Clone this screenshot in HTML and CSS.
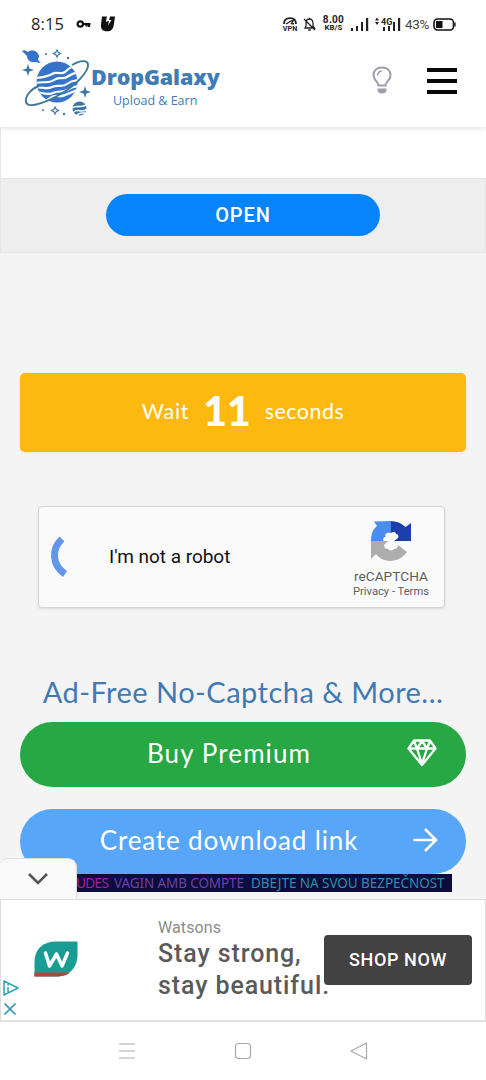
FILE: index.html
```html
<!DOCTYPE html>
<html lang="en">
<head>
<meta charset="utf-8">
<meta name="viewport" content="width=device-width">
<title>DropGalaxy</title>
<link rel="stylesheet" href="styles.css">
</head>
<body>
<div class="screen">
  <div class="status">
    <span class="clock">8:15</span>
    <svg class="key" width="16" height="10" viewBox="0 0 16 10"><path d="M4.500 5H14.500M13 5v3M10.500 5v2.500" fill="none" stroke="#111" stroke-width="2.200"/><circle cx="4.300" cy="5" r="2.700" fill="#fff" stroke="#111" stroke-width="2.200"/></svg>
    <svg class="app" width="16" height="16" viewBox="0 0 16 16"><path d="M2 0.500h5l-1.200 5.200L9 5 8 9.500 11.500 4H9.200L10 .5h5L13.800 9c-.6 4.200-3 6.300-6.800 6.300C2.500 15.300.5 12.500 1 8.500z" fill="#111"/></svg>
    <span class="spacer"></span>
    <span class="vpn"><svg width="14" height="8" viewBox="0 0 14 8"><path d="M1 7C1 3 3.600 1.200 7 1.200S13 3 13 7" fill="none" stroke="#222" stroke-width="1.800"/><path d="M3 7l4-2.500L10.500 3 8.500 6.500 11 7" fill="none" stroke="#222" stroke-width="1.300"/></svg><b>VPN</b></span>
    <svg class="bell" width="13" height="15" viewBox="0 0 13 15"><path d="M2 11h9.500L10 9V6c0-2.400-1.300-4-3.500-4S3 3.600 3 6v3zM5.200 13h2.600M6.500 2V.7M1 2l11 11" fill="none" stroke="#222" stroke-width="1.300"/></svg>
    <span class="speed"><b>8.00</b><b>KB/S</b></span>
    <svg class="sig1" width="19" height="14" viewBox="0 0 19 14" fill="#222"><path d="M1 11h2v3H1zM6 9h2v5H6zM11 5h2v9h-2zM16 1h2.200v13H16z"/></svg>
    <svg class="sig2" width="27" height="16" viewBox="0 0 27 16" fill="#222"><path d="M1 4.500l2-3 2 3zM1 6l2 3 2-3z"/><text x="7" y="9" class="fourg">4G</text><path d="M9 11h2v4H9zM14 10h2v5h-2zM19 6h2v9h-2zM24 2h2.200v13H24z"/></svg>
    <span class="percent">43%</span>
    <svg class="battery" width="23" height="13" viewBox="0 0 23 13"><rect x="1" y="1" width="19.500" height="11" rx="3.500" fill="none" stroke="#111" stroke-width="1.600"/><path d="M3 3h6.500v7H3z" fill="#111"/><path d="M22 4.500v4" stroke="#111" stroke-width="1.300"/></svg>
  </div>
  <header class="header">
    <svg class="planet" width="70" height="70" viewBox="0 0 70 70">
      <defs><clipPath id="globe"><circle cx="36" cy="34" r="20.500"/></clipPath></defs>
      <circle cx="36" cy="34" r="20.500" fill="#3674c9"/>
      <g clip-path="url(#globe)" fill="none" stroke="#fff" stroke-width="2.200"><path d="M15 30c8-1 11-1 16-4s9 1 13-2 5-6 13-7"/><path d="M14 35c9-2 14 1 19-3s8 0 13-3 5-4 13-5"/><path d="M13 40c8-2 12 2 18-1s10 1 15-3 6-3 12-4"/><path d="M14 44c8 0 12 4 18 1s9 0 14-3 7-4 12-4"/><path d="M23 54c5-2 7-7 13-6s11-2 20-6"/></g>
      <path d="M51 17c9-5 15-5 16-1 1 7-11 21-29 31S6 60 5 54c-1-5 4-13 13-16" fill="none" stroke="#3f7897" stroke-width="1.900"/>
      <path d="M1 3c3-2 4 0 6 1 4-3 10-1 11 4l-1 4 3 3c-3 0-4-1-6-1-4 1-8-2-8-6z" fill="#3674c9"/>
      <g fill="#3b76a8"><path d="M7 16l1.400 4.600L13 22l-4.600 1.400L7 28l-1.400-4.600L1 22l4.600-1.400zM64 38l1.400 4.600L70 44l-4.600 1.400L64 50l-1.400-4.600L58 44l4.600-1.400z"/><circle cx="25" cy="6" r="1"/><circle cx="47" cy="10" r="1.200"/><circle cx="22" cy="62" r="1"/><circle cx="43" cy="66" r="1.200"/></g>
      <path d="M36 2l1.200 2.300L39.500 5.500l-2.300 1.200L36 9l-1.200-2.300-2.300-1.200 2.300-1.200zM34 59l1.200 2.300 2.300 1.200-2.300 1.200L34 66l-1.200-2.300-2.300-1.200 2.300-1.200z" fill="none" stroke="#3b76a8" stroke-width="1.200"/>
      <circle cx="58.500" cy="60.500" r="7" fill="#3b76a8"/><path d="M51 60c6-4 6 1 14-3M53 64c4-4 8 2 13-3M56 68c1-4 5-3 8-3" stroke="#fff" stroke-width="1.500" fill="none"/>
    </svg>
    <div class="brand"><span class="name">DropGalaxy</span><span class="tagline">Upload &amp; Earn</span></div>
    <svg class="bulb" width="20" height="28" viewBox="0 0 20 28"><path d="M6.500 19.500c0-4-5-5-5-10.300C1.500 4.500 5 1.500 10 1.500s8.500 3 8.500 7.700c0 5.300-5 6.300-5 10.300z" fill="#fff" stroke="#9b9fac" stroke-width="2"/><path d="M5.500 9.500C5.700 7 7.200 5.300 9.800 5" fill="none" stroke="#9b9fac" stroke-width="1.300"/><path d="M5.500 22.500h9V24c0 2-1.500 3.500-4.500 3.500S5.500 26 5.500 24z" fill="#9b9fac"/></svg>
    <div class="burger"><i></i><i></i><i></i></div>
  </header>
  <div class="blank"></div>
  <section class="promo"><div class="open">OPEN</div></section>
  <main class="content">
    <div class="wait"><span class="w1">Wait</span><b>11</b><span class="w2">seconds</span></div>
    <div class="captcha">
      <svg class="spin" width="20" height="42" viewBox="0 0 20 42"><path d="M13 3C2 13 3 29 16 38" fill="none" stroke="#6196e8" stroke-width="7"/></svg>
      <span class="robot">I'm not a robot</span>
      <div class="badge">
        <svg width="42" height="42" viewBox="0 0 42 42"><path d="M20.500 1v12c-4-1-6 1-5 4-2 0-3 2-2 4H1C1 14 3 9 7 6L4 1.500z" fill="#4a8df0"/><path d="M20.500 1c6 0 11 2 15 6l5.500-4v18H24l4-3c1-2 0-4-2-4 0-2-2-3-5.500-1z" fill="#1c3fae"/><path d="M1 21h17l-4 4c0 3 2 4 4 4 2 2 4 2 6 0 3 0 4-2 4-4l9 7c-8 11-23 12-31 2l-5 5z" fill="#adadad"/></svg>
        <span class="re">reCAPTCHA</span><span class="terms">Privacy - Terms</span>
      </div>
    </div>
    <h2 class="pitch"><span>Ad-Free No-Captcha &amp; More...</span></h2>
    <div class="btn green"><span class="t1">Buy Premium</span><svg width="30" height="28" viewBox="0 0 30 28"><path d="M7 1.500h16l5.500 8L15 26 1.500 9.500zM2 9.500h26M10 9.500L15 25l5-15.500M7 2l3 7.500L15 2l5 7.500L23 2" fill="none" stroke="#fff" stroke-width="2.300" stroke-linejoin="round"/></svg></div>
    <div class="btn blue"><span class="t2">Create download link</span><svg class="arrow" width="26" height="26" viewBox="0 0 26 26"><path d="M1.500 13h22M13 2l11 11-11 11" fill="none" stroke="#fff" stroke-width="2.600"/></svg></div>
    <div class="ticker"><span class="k1">UDES</span><span class="k2">VAGIN AMB COMPTE</span><span class="k3">DBEJTE NA SVOU BEZPEČNOST</span></div>
    <div class="tab"><svg width="20" height="12" viewBox="0 0 20 12"><path d="M1 1l9 9 9-9" fill="none" stroke="#555" stroke-width="2.500"/></svg></div>
  </main>
  <section class="ad">
    <div class="choices"><svg width="16" height="16" viewBox="0 0 16 16"><path d="M1 1v14l14-7zM5 7v5M5 4v1.500" fill="none" stroke="#2ba3b9" stroke-width="1.500" stroke-linejoin="round"/></svg><svg width="14" height="14" viewBox="0 0 14 14"><path d="M1.500 1.500l11 11m0-11l-11 11" stroke="#2a95b0" stroke-width="1.700"/></svg></div>
    <svg class="watsons" width="44" height="36" viewBox="0 0 44 36"><path d="M.5 35.500V21C.5 8 9 .5 22 .5h21.500V14c0 13-9 21.500-21 21.500z" fill="#199d93"/><path d="M.5 31.500H36c-4 3-8 4-14 4H.5z" fill="#b8423e"/><path d="M11.500 12l4 13 7-12 5.500 12 5.500-13" fill="none" stroke="#fff" stroke-width="3.500" stroke-linecap="round" stroke-linejoin="round"/></svg>
    <div class="copy"><span class="advertiser">Watsons</span><span class="l1">Stay strong,</span><span class="l2">stay beautiful.</span></div>
    <div class="shop">SHOP NOW</div>
  </section>
  <nav class="nav">
    <svg width="18" height="18" viewBox="0 0 18 18"><path d="M1 2h16M1 9h16M1 16h16" stroke="#a9a9a9" stroke-width="1.200"/></svg>
    <svg width="18" height="18" viewBox="0 0 18 18"><rect x="1.500" y="1.500" width="15" height="15" rx="3" fill="none" stroke="#a9a9a9" stroke-width="1.200"/></svg>
    <svg width="18" height="18" viewBox="0 0 18 18"><path d="M16.500 1v16L1 9z" fill="none" stroke="#a9a9a9" stroke-width="1.200" stroke-linejoin="round"/></svg>
  </nav>
</div>
</body>
</html>
```
FILE: styles.css
```css
* { box-sizing: border-box; }
body { margin: 0; font-family: Roboto, sans-serif; }
svg { display: block; flex: none; }
span, b, .open, .shop { white-space: nowrap; }
.screen { width: 486px; height: 1080px; display: flex; flex-direction: column; overflow: hidden; background: #fff; }
.screen > * { flex: none; }

.status { height: 48px; display: flex; align-items: center; padding-left: 31px; padding-right: 30px; color: #222; }
.clock { font: 16.500px/20px "Open Sans", sans-serif; width: 45px; letter-spacing: 0.1px; }
.app { margin-left: 8px; }
.spacer { flex: 1; }
.vpn { width: 14px; display: flex; flex-direction: column; align-items: center; }
.vpn b { font-size: 7.200px; line-height: 7px; }
.bell { margin-left: 6px; }
.speed { width: 23px; margin-left: 6px; display: flex; flex-direction: column; align-items: center; }
.speed b { font-size: 10px; line-height: 8px; letter-spacing: 0.3px; }
.speed b + b { font-size: 7.800px; line-height: 8px; letter-spacing: 0.1px; }
.sig1 { margin-left: 5px; }
.sig2 { margin-left: 5px; }
.fourg { font: bold 9px Roboto, sans-serif; }
.percent { font: 13.500px/18px Roboto, sans-serif; color: #444; margin-left: 4px; width: 24px; letter-spacing: -0.3px; }
.battery { margin-left: 4px; }

.header { height: 79px; padding-left: 21px; padding-right: 29px; display: flex; align-items: flex-start; box-shadow: 0 1px 6px rgba(0,0,0,.14); clip-path: inset(0 0 -8px 0); position: relative; }
.brand { flex: 1; height: 66px; padding-top: 14px; display: flex; flex-direction: column; font-family: "Open Sans", sans-serif; color: #3f7cb5; }
.name { font-size: 21.500px; font-weight: 800; line-height: 30px; letter-spacing: -0.1px; }
.tagline { font-size: 12.500px; line-height: 18px; padding-left: 22px; }
.bulb { margin-top: 18px; margin-right: 35px; }
.burger { width: 30px; height: 26px; margin-top: 20px; display: flex; flex-direction: column; justify-content: space-between; }
.burger i { height: 4px; background: #080808; }
.blank { height: 51px; border-left: 1px solid #e8e8e8; }
.promo { height: 75px; background: #eee; border: 1px solid #e6e6e6; display: flex; justify-content: center; padding-top: 15px; }
.open { width: 274px; height: 42px; border-radius: 21px; background: #0784fc; color: #fff; font-size: 20px; font-weight: 500; line-height: 43px; letter-spacing: .9px; text-align: center; }

.content { height: 646px; padding: 120px 20px 0; background: #f4f4f4; position: relative; display: flex; flex-direction: column; }
.content > * { flex: none; }
.wait { height: 79px; border-radius: 5px; background: #fdb910; color: #fff; display: flex; justify-content: center; align-items: center; padding-bottom: 3px; font: 21.500px/30px Lato, sans-serif; box-shadow: 0 1px 3px rgba(253,210,100,.3); }
.w1 { letter-spacing: .7px; }
.w2 { letter-spacing: .45px; }
.wait b { font-size: 41px; font-weight: 900; line-height: 50px; margin: 0 14px; }
.captcha { height: 102px; margin: 54px 21px 0 18px; border: 1px solid #d3d3d3; border-radius: 4px; background: #fafafa; box-shadow: 0 1px 3px rgba(0,0,0,.1); display: flex; align-items: center; padding-left: 10px; }
.robot { font-size: 19px; color: #111; margin-left: 40px; flex: 1; letter-spacing: -.03px; padding-bottom: 2px; }
.badge { width: 90px; margin-right: 8px; padding-top: 5px; display: flex; flex-direction: column; align-items: center; color: #5d5d5d; }
.re { font-size: 13.700px; line-height: 18px; margin-top: 5px; }
.terms { font-size: 11.200px; line-height: 14px; }
.pitch { margin: 62px 0 0; height: 52px; text-align: center; font: 400 29px/43px Lato, sans-serif; color: #4279b2; letter-spacing: .48px; }
.btn { height: 65px; border-radius: 33px; display: flex; align-items: center; padding: 0 29px 0 31px; color: #fff; font: 26px/36px Lato, sans-serif; }
.btn span { flex: 1; text-align: center; padding-bottom: 4px; }
.t1 { letter-spacing: 1.100px; }
.t2 { letter-spacing: .85px; }
.green { background: #28a745; }
.green svg { margin-top: -3px; }
.blue { background: #57a6f9; margin-top: 22px; }
.arrow { margin: -3px -1px 0 5px; }
.ticker { width: 376px; height: 18px; margin-left: 56px; background: #0d0c3c; display: flex; align-items: center; gap: 6px; font: 13.500px/18px "Noto Sans", sans-serif; overflow: hidden; }
.k1 { color: #a12197; width: 32px; letter-spacing: -.6px; }
.k2 { color: #6844a7; width: 131px; letter-spacing: -.1px; }
.k3 { color: #328ca6; letter-spacing: -.05px; }
.tab { position: absolute; left: 0; bottom: 0; width: 77px; height: 41px; border: 1px solid #ddd; border-left: 0; border-bottom: 0; border-radius: 7px 9px 0 0; background: #fafafa; padding: 14px 0 0 28px; }
.ad { height: 123px; border: 1px solid #ddd; border-bottom: 2px solid #e0e0e0; display: flex; background: #fff; }
.choices { width: 33px; padding: 80px 0 0 2px; display: flex; flex-direction: column; gap: 6px; }
.watsons { margin-top: 41px; }
.copy { width: 166px; margin-left: 80px; padding-top: 18px; display: flex; flex-direction: column; color: #5a5a5a; }
.advertiser { font-size: 16px; line-height: 20px; color: #8b8b8b; letter-spacing: .1px; }
.l1, .l2 { font-size: 25px; font-weight: 500; line-height: 32px; letter-spacing: .9px; }
.shop { width: 148px; height: 50px; margin-top: 35px; border-radius: 4px; background: #424242; color: #fff; font-size: 18px; font-weight: 500; line-height: 49px; letter-spacing: .6px; text-align: center; }
.nav { height: 58px; display: flex; justify-content: center; align-items: center; gap: 98px; }
```
